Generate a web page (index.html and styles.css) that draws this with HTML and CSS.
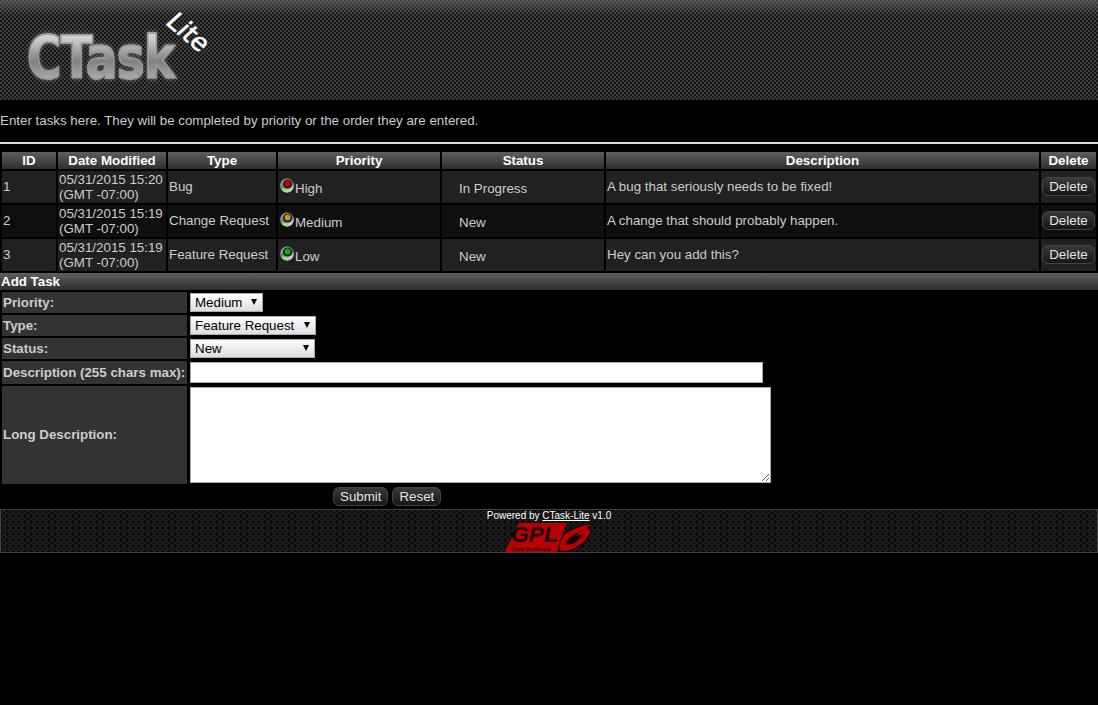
FILE: index.html
```html
<!DOCTYPE html>
<html>
<head>
<meta charset="utf-8">
<title>CTask Lite</title>
<link rel="stylesheet" href="styles.css">
</head>
<body>
<header class="banner">
  <div class="logo">
    <span class="logo-word">CTask</span>
    <span class="logo-lite">Lite</span>
  </div>
</header>
<p class="intro">Enter tasks here. They will be completed by priority or the order they are entered.</p>
<hr class="rule">
<table class="tasks">
  <colgroup>
    <col class="c-id"><col class="c-date"><col class="c-type"><col class="c-pri"><col class="c-status"><col class="c-desc"><col class="c-del">
  </colgroup>
  <thead>
    <tr><th>ID</th><th>Date Modified</th><th>Type</th><th>Priority</th><th>Status</th><th>Description</th><th>Delete</th></tr>
  </thead>
  <tbody>
    <tr class="odd">
      <td>1</td><td class="date">05/31/2015 15:20<br>(GMT -07:00)</td><td>Bug</td>
      <td class="pri"><svg class="led" width="15" height="16" viewBox="0 0 15 16"><use href="#led-base"/><circle cx="7.6" cy="6.6" r="3" fill="#c80000"/></svg>High</td>
      <td class="status">In Progress</td><td>A bug that seriously needs to be fixed!</td>
      <td class="del"><button class="btn">Delete</button></td>
    </tr>
    <tr class="even">
      <td>2</td><td class="date">05/31/2015 15:19<br>(GMT -07:00)</td><td>Change Request</td>
      <td class="pri"><svg class="led" width="15" height="16" viewBox="0 0 15 16"><use href="#led-base"/><circle cx="7.6" cy="6.6" r="3" fill="#d09a00"/></svg>Medium</td>
      <td class="status">New</td><td>A change that should probably happen.</td>
      <td class="del"><button class="btn">Delete</button></td>
    </tr>
    <tr class="odd">
      <td>3</td><td class="date">05/31/2015 15:19<br>(GMT -07:00)</td><td>Feature Request</td>
      <td class="pri"><svg class="led" width="15" height="16" viewBox="0 0 15 16"><use href="#led-base"/><circle cx="7.6" cy="6.6" r="3" fill="#00b800"/></svg>Low</td>
      <td class="status">New</td><td>Hey can you add this?</td>
      <td class="del"><button class="btn">Delete</button></td>
    </tr>
  </tbody>
</table>
<div class="add-title">Add Task</div>
<form class="add">
  <div class="field">
    <label class="lbl">Priority:</label>
    <div class="ctl"><span class="sel sel-pri">Medium<i class="arrow"></i></span></div>
  </div>
  <div class="field">
    <label class="lbl">Type:</label>
    <div class="ctl"><span class="sel sel-type">Feature Request<i class="arrow"></i></span></div>
  </div>
  <div class="field">
    <label class="lbl">Status:</label>
    <div class="ctl"><span class="sel sel-status">New<i class="arrow"></i></span></div>
  </div>
  <div class="field field-desc">
    <label class="lbl">Description (255 chars max):</label>
    <div class="ctl"><input class="desc" type="text"></div>
  </div>
  <div class="field field-long">
    <label class="lbl lbl-long">Long Description:</label>
    <div class="ctl"><textarea class="long"></textarea></div>
  </div>
  <div class="actions">
    <button type="button" class="btn">Submit</button>
    <button type="button" class="btn">Reset</button>
  </div>
</form>
<footer class="foot">
  <div class="powered">Powered by <a href="#">CTask-Lite</a> v1.0</div>
  <svg class="gpl" width="88" height="31" viewBox="0 0 88 31">
    <path d="M14 1 H62 Q56 14 52 30 H0 Z" fill="#b80000"/>
    <path d="M54 24 Q56 12 66 8 Q76 3 88 1 Q85 4 82 6 Q87 8 85 12 Q78 24 64 29 Q52 31 54 24 Z" fill="#b80000" stroke="#160000" stroke-width="1"/>
    <path d="M60 22 Q66 12 76 10 L70 14 L80 12 L71 20 Q66 24 60 22 Z" fill="#160000"/>
    <text class="gpl-word" x="6" y="20" textLength="47" lengthAdjust="spacingAndGlyphs">GPL</text>
    <text class="gpl-sub" x="6" y="29" textLength="40" lengthAdjust="spacingAndGlyphs">Free Software</text>
  </svg>
</footer>
<svg class="defs" width="0" height="0">
  <defs>
    <linearGradient id="ring" x1="0.2" y1="0" x2="0.6" y2="1"><stop offset="0" stop-color="#aaa"/><stop offset="0.5" stop-color="#777"/><stop offset="1" stop-color="#eee"/></linearGradient>
    <g id="led-base">
      <circle cx="7" cy="8.6" r="7" fill="url(#ring)"/>
      <path d="M1 11 Q3 15 7 15.5 Q10 15.5 12 13 Q6 14.5 1 11 Z" fill="#8fe87a"/>
      <circle cx="7.6" cy="7" r="4.6" fill="#1a1a1a"/>
    </g>
  </defs>
</svg>
</body>
</html>
```
FILE: styles.css
```css
html, body {
  margin: 0;
  padding: 0;
  background: #000;
  color: #ccc;
  font-family: "Liberation Sans", Arial, sans-serif;
  font-size: 13.33px;
}
.banner {
  height: 100px;
  background-color: #222;
  background-image:
    linear-gradient(rgba(130,130,130,.45) 0, rgba(85,85,85,0) 16px),
    repeating-conic-gradient(#3e3e3e 0 25%, #161616 0 50%);
  background-size: 100% 100%, 4px 4px;
}
.logo {
  position: relative;
  height: 100px;
}
.logo-word {
  position: absolute;
  left: 27px;
  top: 25px;
  font-size: 58px;
  line-height: 66px;
  font-weight: bold;
  font-family: "DejaVu Sans", sans-serif;
  letter-spacing: -1px;
  transform: scaleX(0.81);
  transform-origin: left center;
  color: transparent;
  -webkit-text-stroke: 1.5px #9a9a9a;
  background: linear-gradient(#d0d0d0 20%, #808080 55%, #a8a8a8 80%);
  -webkit-background-clip: text;
  background-clip: text;
  filter: drop-shadow(0 0 2px #777);
}
.logo-lite {
  position: absolute;
  left: 159px;
  top: -2px;
  font-family: "DejaVu Sans", sans-serif;
  font-size: 25px;
  line-height: 30px;
  color: #fff;
  -webkit-text-stroke: 0.6px #fff;
  transform: rotate(40deg) skewX(-8deg);
  transform-origin: left bottom;
}
.intro {
  margin: 0;
  padding-top: 13px;
  line-height: 15px;
  height: 29px;
}
.rule {
  margin: 0;
  border: 0;
  height: 2px;
  background: #ddd;
}
.tasks {
  width: 1098px;
  margin-top: 6px;
  table-layout: fixed;
  border-collapse: separate;
  border-spacing: 2px;
}
.c-id { width: 54px; }
.c-date { width: 108px; }
.c-type { width: 108px; }
.c-pri { width: 162px; }
.c-status { width: 162px; }
.c-desc { width: 433px; }
.c-del { width: 55px; }
.tasks th {
  height: 17px;
  padding: 0;
  color: #fff;
  font-size: 13.33px;
  font-weight: bold;
  line-height: 15px;
  background: linear-gradient(#5e5e5e, #2e2e2e);
}
.tasks td {
  height: 31px;
  padding: 0 1px 1px;
  line-height: 15px;
  overflow: hidden;
  white-space: nowrap;
}
.tasks td.date { height: 32px; padding-bottom: 0; }
.odd td { background: #212121; }
.even td { background: #0f0f0f; }
.tasks td.pri { padding: 0 1px 2px 2px; height: 30px; }
.tasks td.status { padding: 2px 1px 0 17px; height: 30px; }
.tasks td.del { padding: 0 0 1px; height: 31px; text-align: center; }
.led { vertical-align: 0; }
.defs { position: absolute; }
.btn {
  font: 13.33px "Liberation Sans", Arial, sans-serif;
  color: #e4e4e4;
  height: 19px;
  padding: 0 6px;
  border: 1px solid #444;
  border-radius: 6px;
  background: linear-gradient(#3a3a3a, #161616);
}
.del .btn { display: block; margin: 0 auto 0 1px; width: 53px; padding: 0; }
.add-title {
  height: 16px;
  padding: 1px 0 0 1px;
  color: #fff;
  font-weight: bold;
  line-height: 16px;
  background: linear-gradient(#5e5e5e, #2e2e2e);
}
.add { display: block; padding-top: 2px; }
.field {
  display: flex;
  align-items: stretch;
  gap: 2px;
  padding-left: 2px;
  margin-bottom: 2px;
  min-height: 21px;
}
.field-desc { min-height: 23px; }
.lbl {
  display: flex;
  align-items: center;
  width: 184px;
  padding-left: 1px;
  flex: none;
  font-weight: bold;
  color: #ccc;
  background: #333;
}
.lbl-long { padding-bottom: 2px; }
.ctl {
  display: flex;
  align-items: center;
  padding-left: 1px;
}
.sel {
  display: block;
  position: relative;
  box-sizing: border-box;
  height: 19px;
  line-height: 17px;
  padding-left: 4px;
  color: #000;
  border: 1px solid #aaa;
  background: linear-gradient(#fff, #ddd);
}
.sel-pri { width: 73px; }
.sel-type { width: 126px; }
.sel-status { width: 125px; }
.arrow {
  position: absolute;
  right: 5px;
  top: 5px;
  width: 0;
  height: 0;
  border-left: 3px solid transparent;
  border-right: 3px solid transparent;
  border-top: 6px solid #000;
}
.desc {
  display: block;
  box-sizing: border-box;
  width: 573px;
  height: 21px;
  margin: 0;
  border: 1px solid #aaa;
  background: #fff;
}
.field-long { min-height: 98px; margin-bottom: 0; }
.long {
  display: block;
  box-sizing: border-box;
  width: 581px;
  height: 96px;
  margin: 0;
  border: 1px solid #aaa;
  background: #fff;
}
.actions {
  display: flex;
  gap: 4px;
  padding-left: 333px;
  height: 25px;
  align-items: center;
}
.foot {
  position: relative;
  box-sizing: border-box;
  height: 44px;
  border: 1px solid #444;
  text-align: center;
  font-size: 10px;
  color: #fff;
  background-color: #0b0b0b;
  background-image:
    radial-gradient(circle at 3px 3px, transparent 1.4px, #262626 1.7px, #262626 2.4px, transparent 2.8px);
  background-size: 6px 6px;
}
.powered { line-height: 12px; }
.powered a { color: #fff; }
.gpl {
  display: block;
  margin: 0 auto;
}
.gpl-word {
  font: italic bold 22px "Liberation Sans", Arial, sans-serif;
  fill: #1c0000;
}
.gpl-sub {
  font: italic bold 5px "Liberation Sans", Arial, sans-serif;
  fill: #1c0000;
}
```
